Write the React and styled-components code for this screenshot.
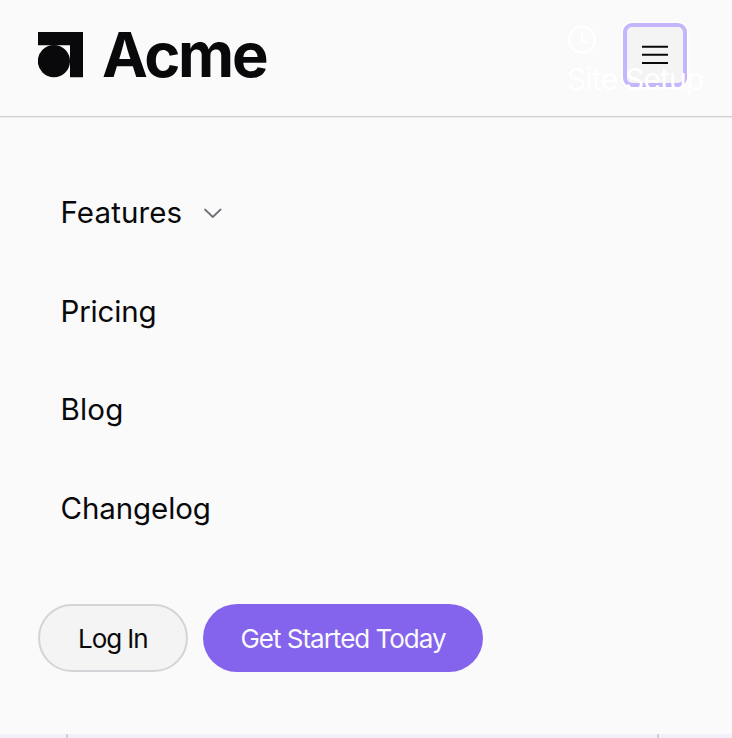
import React from "react";
import styled, { createGlobalStyle } from "styled-components";

const GlobalStyle = createGlobalStyle`
  * { box-sizing: border-box; }
  html, body { margin: 0; height: 100%; overflow: hidden; }
  body { background: #fafafa; font-family: Inter, "Liberation Sans", sans-serif; color: #09090b; }
  button { font: inherit; }
`;

const Page = styled.div`
  position: relative;
  width: 732px;
  height: 738px;
  overflow: hidden;
  background: #fafafa;
`;

const Header = styled.header`
  display: flex;
  justify-content: space-between;
  height: 117px;
  padding: 23px 45px 0 37.5px;
  border-bottom: 1px solid #d0d0d4;
  box-shadow: 0 1px 0 #ededf0;
`;

const Brand = styled.a`
  display: flex;
  align-items: flex-start;
  gap: 18.5px;
  height: 64px;
  padding-top: 9px;
`;

const Wordmark = styled.span`
  margin-top: -9px;
  font-size: 61.5px;
  font-weight: 700;
  line-height: 64px;
  letter-spacing: -2.3px;
`;

const MenuToggle = styled.button`
  display: flex;
  align-items: center;
  justify-content: center;
  width: 64px;
  height: 64px;
  padding: 0;
  border: 4px solid #c4b5fd;
  border-radius: 9px;
  background: #f4f4f5;
  box-shadow: 0 0 0 1.5px #fff;
`;

const SetupBadge = styled.div`
  position: absolute;
  top: 25px;
  left: 567px;
  display: flex;
  flex-direction: column;
  color: #fff;
  pointer-events: none;
`;

const SetupLabel = styled.span`
  margin-top: 5px;
  font-size: 30px;
  line-height: 38px;
  letter-spacing: -0.8px;
  white-space: nowrap;
`;

const Menu = styled.main`
  height: 616.5px;
  padding: 45.5px 37.5px 0;
`;

const Nav = styled.nav`
  display: flex;
  flex-direction: column;
`;

const NavItem = styled.a`
  display: flex;
  align-items: center;
  gap: 21px;
  height: 98.7px;
  padding-left: 23px;
  font-size: 29.5px;
  letter-spacing: ${(p) => p.$tracking || "0"};
`;

const Actions = styled.div`
  display: flex;
  gap: 15px;
  margin-top: 46.5px;
`;

const Action = styled.button`
  width: ${(p) => (p.$primary ? 280 : 150.5)}px;
  height: 68.5px;
  padding: 0;
  border: ${(p) => (p.$primary ? "0" : "2px solid #d4d4d8")};
  border-radius: 35px;
  background: ${(p) => (p.$primary ? "#8463ed" : "#f4f4f4")};
  color: ${(p) => (p.$primary ? "#fafafa" : "#09090b")};
  font-size: 26px;
  letter-spacing: ${(p) => p.$tracking};
  white-space: nowrap;
`;

const NextSection = styled.div`
  height: 5px;
  padding-left: 66px;
  background: #f2f1fa;
`;

const Column = styled.div`
  width: 593px;
  height: 100%;
  border: solid #d0d0d8;
  border-width: 0 2px;
`;

export default function App() {
  return (
    <Page>
      <GlobalStyle />
      <Header>
        <Brand>
          <svg width="46" height="46" viewBox="0 0 46 46" fill="#09090b">
            <path d="M0 0H45V45.2H32V13.2H0Z" />
            <circle cx="15.9" cy="29.2" r="16.1" />
          </svg>
          <Wordmark>Acme</Wordmark>
        </Brand>
        <MenuToggle aria-label="Menu">
          <svg width="28" height="22" viewBox="0 0 28 22" fill="none" stroke="#09090b" strokeWidth="2">
            <path d="M1 2.7H27M1 10.7H27M1 19H27" />
          </svg>
        </MenuToggle>
      </Header>
      <Menu>
        <Nav>
          <NavItem $tracking="0.12px">
            Features
            <svg width="19" height="12" viewBox="0 0 19 12" fill="none" stroke="#71717a" strokeWidth="1.8" strokeLinecap="round" strokeLinejoin="round">
              <path d="M2 3.5L9.8 11L17.6 3.5" />
            </svg>
          </NavItem>
          <NavItem $tracking="-0.15px">Pricing</NavItem>
          <NavItem $tracking="0.2px">Blog</NavItem>
          <NavItem $tracking="-0.1px">Changelog</NavItem>
        </Nav>
        <Actions>
          <Action $tracking="-1.1px">Log In</Action>
          <Action $primary $tracking="-1px">Get Started Today</Action>
        </Actions>
      </Menu>
      <NextSection><Column /></NextSection>
      <SetupBadge>
        <svg width="30" height="30" viewBox="0 0 30 30" fill="none" stroke="currentColor" strokeWidth="2.4" strokeLinecap="round" strokeLinejoin="round">
          <circle cx="15" cy="14.8" r="12.9" />
          <path d="M15 7.5V15.2L20 17.8" />
        </svg>
        <SetupLabel>Site Setup</SetupLabel>
      </SetupBadge>
    </Page>
  );
}
